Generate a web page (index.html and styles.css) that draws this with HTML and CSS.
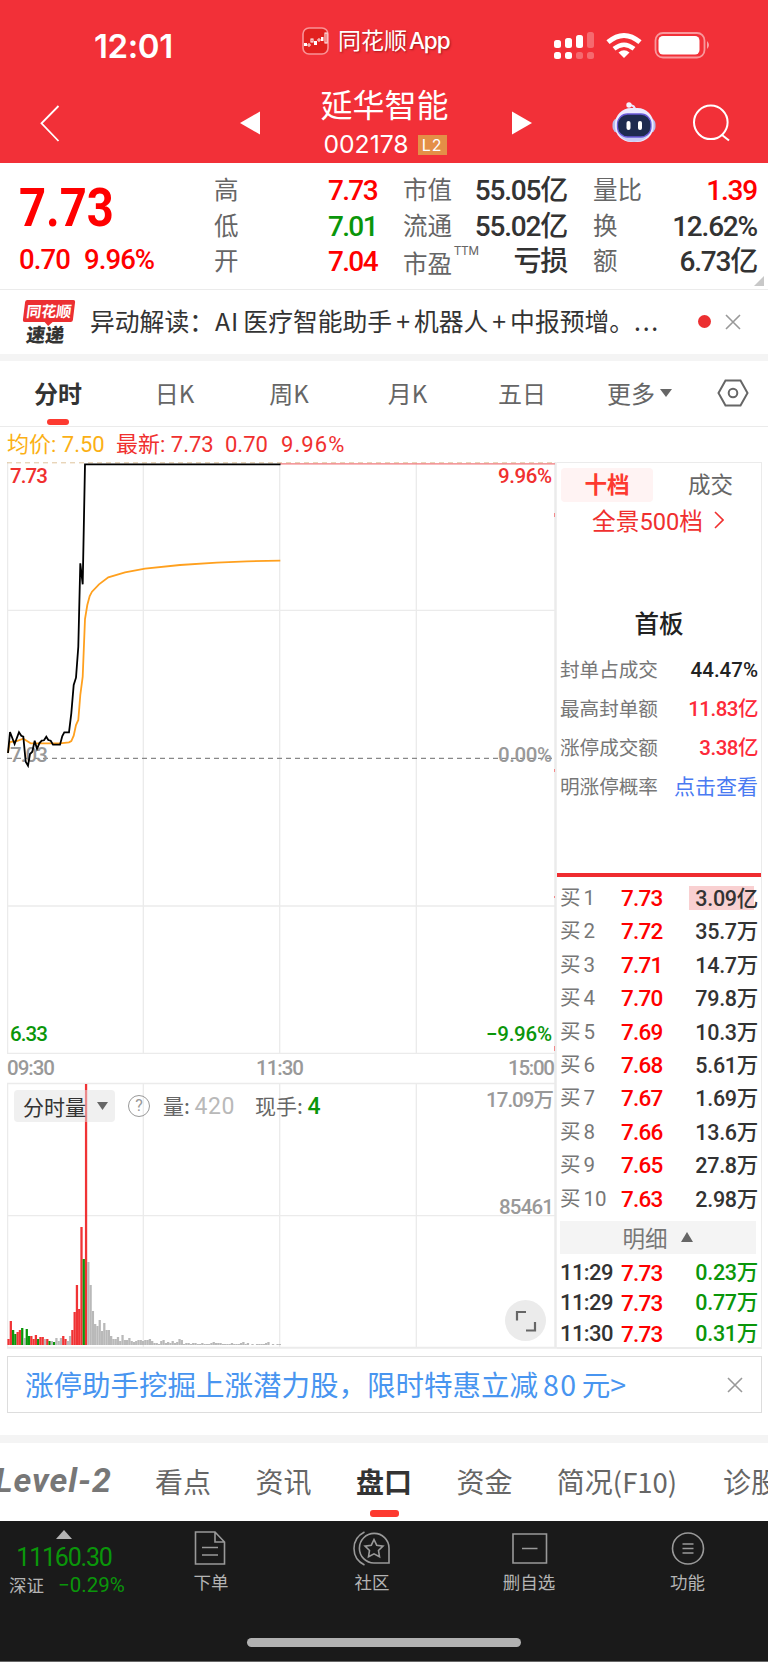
FILE: index.html
```html
<!doctype html>
<html lang="zh-CN">
<head>
    <meta charset="UTF-8">
    <meta name="viewport" content="width=device-width, initial-scale=1.0">
    <title>延华智能 002178</title>
    <link rel="stylesheet" href="styles.css">
</head>
<body>
<header class="top">
    <div class="status">
        <div class="clock">12:01</div>
        <div class="brand">
            <svg width="27" height="28" viewBox="0 0 27 28">
                <rect x="1" y="1" width="25" height="26" rx="6" fill="#e2211f" stroke="#f99397" stroke-width="1.6"/>
                <g fill="#fff">
                    <rect x="2" y="16" width="3" height="3"/>
                    <rect x="12" y="14" width="3" height="4"/>
                    <rect x="19" y="10" width="2.5" height="4"/>
                </g>
                <g fill="none" stroke="#fff">
                    <circle cx="7" cy="18" r="1.2"/>
                    <rect x="9" y="12" width="2" height="3"/>
                    <circle cx="17" cy="13" r="1.2"/>
                    <rect x="23" y="6" width="2" height="10"/>
                </g>
            </svg>
            <span>同花顺<b>App</b></span>
        </div>
        <svg class="phone-icons" width="158" height="30" viewBox="552 30 158 30">
            <g fill="#fff">
                <rect x="553" y="40" width="7" height="8" rx="2.5"/>
                <rect x="564" y="38" width="7" height="10" rx="2.5"/>
                <rect x="575" y="35" width="7" height="13" rx="2.5"/>
                <rect x="553" y="52" width="7" height="7" rx="2.5"/>
                <rect x="564" y="52" width="7" height="7" rx="2.5"/>
                <g opacity=".28">
                    <rect x="586" y="32" width="7" height="16" rx="2.5"/>
                    <rect x="575" y="52" width="7" height="7" rx="2.5"/>
                    <rect x="586" y="52" width="7" height="7" rx="2.5"/>
                </g>
                <path d="M623 58l-5.5-5.5q5.500-4.500 11 0z"/>
                <rect x="657.500" y="36" width="41" height="18.500" rx="4.500"/>
                <path d="M706 41q4 4 0 8z" opacity=".55"/>
            </g>
            <g fill="none" stroke="#fff">
                <path d="M607 42.200q16-13.400 32 0" stroke-width="5"/>
                <path d="M613 48.800q10-8.200 20 0" stroke-width="4.500"/>
                <rect x="654.500" y="33" width="49" height="24.500" rx="7.500" stroke-width="1.800" opacity=".5"/>
            </g>
        </svg>
    </div>
    <div class="nav">
        <svg width="24" height="40" viewBox="38 103 24 40"><path d="M58.500 106L41.500 123.300L58.500 141" fill="none" stroke="#fff" stroke-width="1.800"/></svg>
        <svg class="prev" width="20" height="24" viewBox="0 0 20 24"><path d="M0 12L20 .5v23z" fill="#fff"/></svg>
        <div class="stock">
            <h1>延华智能</h1>
            <div class="code">002178<i>L2</i></div>
        </div>
        <svg class="next" width="20" height="24" viewBox="0 0 20 24"><path d="M20 12L0 .5v23z" fill="#fff"/></svg>
        <svg class="robot" width="46" height="42" viewBox="610 101 46 42">
            <path d="M634 110q0-5-6-5" fill="none" stroke="#e8e6ff" stroke-width="2.200"/>
            <circle cx="628" cy="105" r="2.700" fill="#f4f3ff"/>
            <rect x="611.500" y="118" width="43" height="15" rx="6" fill="#b6bcec"/>
            <rect x="614" y="108" width="38.500" height="34" rx="16" fill="#eceaff"/>
            <path d="M616 131q5 11 17 11t17-11z" fill="#c9cdf5"/>
            <rect x="616.500" y="114" width="33.500" height="23" rx="10" fill="#1e2b4f" stroke="#6a5ad8" stroke-width="1.300"/>
            <rect x="625.500" y="121" width="4" height="9" rx="2" fill="#fff"/>
            <rect x="637" y="121" width="4" height="9" rx="2" fill="#fff"/>
        </svg>
        <svg class="search" width="40" height="40" viewBox="691 103 40 40"><g fill="none" stroke="#fff" stroke-width="2"><circle cx="709.800" cy="122.300" r="16.800"/><path d="M721 135l7 5.500"/></g></svg>
    </div>
</header>

<section class="quote num">
    <div class="last">
        <strong>7.73</strong>
        <p><span>0.70</span><span>9.96%</span></p>
    </div>
    <dl class="c1">
        <dt>高</dt><dd class="up">7.73</dd>
        <dt>低</dt><dd class="down">7.01</dd>
        <dt>开</dt><dd class="up">7.04</dd>
    </dl>
    <dl class="c2">
        <dt>市值</dt><dd>55.05亿</dd>
        <dt>流通</dt><dd>55.02亿</dd>
        <dt class="pe">市盈<sup>TTM</sup></dt><dd>亏损</dd>
    </dl>
    <dl class="c3">
        <dt>量比</dt><dd class="up">1.39</dd>
        <dt>换</dt><dd>12.62%</dd>
        <dt>额</dt><dd>6.73亿</dd>
    </dl>
</section>

<section class="news">
    <div class="express"><b>同花顺</b><em>速递</em></div>
    <p>异动解读：<span>AI</span>医疗智能助手<u>+</u>机器人<u>+</u>中报预增。<s>...</s></p>
    <i class="dot"></i>
    <svg width="16" height="16" viewBox="0 0 16 16"><path d="M1 1l14 14M15 1L1 15" stroke="#999" stroke-width="1.600"/></svg>
</section>

<nav class="periods">
    <span class="on">分时</span>
    <span>日K</span>
    <span>周K</span>
    <span>月K</span>
    <span>五日</span>
    <span>更多<svg width="12" height="8" viewBox="0 0 12 8"><path d="M0 0h12L6 8z" fill="#666"/></svg></span>
    <span><svg width="32" height="30" viewBox="716 378 32 30"><g fill="none" stroke="#666" stroke-width="2"><path d="M724.500 380.500h15l7 12.500l-7 12.500h-15l-7-12.500z"/><circle cx="732" cy="393" r="4.300"/></g></svg></span>
</nav>

<div class="legend num">
    <span class="avg">均价: 7.50</span><span>最新: 7.73</span><span>0.70</span><span>9.96%</span>
</div>

<main class="board">
    <div class="chart">
        <svg width="550" height="887" viewBox="7 462 550 887">
            <g fill="none" stroke="#ebebeb" stroke-width="1.300">
                <path d="M7 610.300H555M7 906H555M7 1053.300H555M7 1083.500H555M7 1215.700H555"/>
                <path d="M143.300 463V1053M279.700 463V1053M416.300 463V1053M143.300 1084V1347M279.700 1084V1347M416.300 1084V1347"/>
                <path d="M7.600 462V1053M7.600 1083V1348"/>
                <path d="M7 1347.800H557" stroke-width="2"/>
                <path d="M555.500 462V1348" stroke-width="2.500"/>
            </g>
            <path d="M7 462.800H555" stroke="#dfc39c" stroke-dasharray="5 4"/>
            <path d="M280 463.800H555" stroke="#f0797c" stroke-width="1.200"/>
            <path d="M554.500 513v4M554.500 769v3M554.500 896v2M554.500 1046v5" stroke="#f3898b"/>
            <path d="M7 758.300H555" stroke="#888" stroke-width="1.200" stroke-dasharray="5 4"/>
            <g class="axis">
                <text x="10" y="483" textLength="38" class="r">7.73</text>
                <text x="498" y="483" textLength="54" class="r">9.96%</text>
                <text x="10" y="762" textLength="38">7.03</text>
                <text x="498" y="762" textLength="54">0.00%</text>
                <text x="10" y="1041" textLength="38" class="g">6.33</text>
                <text x="486" y="1041" textLength="66" class="g">−9.96%</text>
                <text x="7" y="1075" textLength="48">09:30</text>
                <text x="256" y="1075" textLength="48">11:30</text>
                <text x="508" y="1075" textLength="47">15:00</text>
                <text x="486" y="1107" textLength="68">17.09万</text>
                <text x="499" y="1214" textLength="55">85461</text>
            </g>
            <path d="M8 753L9.700 742L16.700 741L23.300 738.700L27 741L30.700 743.300H60L69 742.300L71.300 741L73.700 735.700L76 725L78.300 720L80.300 695L82.700 676.700L85 619L87.300 605L89.700 596L92 591.700L99 584.300L108.300 577.300L125 572.300L145 568.700L180 565L216.700 562.700L246.700 561.300L280.300 560.700" fill="none" stroke="#ffa01e" stroke-width="1.800"/>
            <path d="M8 753L10 732L14.600 744L19 732.300L21.300 735.700L23.300 736.700L25.700 761.700L28 765.700L30 754L32.300 751.700L34.700 740.700L37 749L39.300 743.300L41.700 740.700L44 740.300L46.300 736.700L48.300 740L50.700 740.700L53 744.700H60L62.300 736L64.300 732.300H69L71.300 713.300L73.700 685L76 677.700L78.300 646.700L80.300 563.300L82.700 584.300L85 464.300H280.500" fill="none" stroke="#000" stroke-width="1.800"/>
            <g id="volume"></g>
        </svg>
        <div class="vol-bar">
            <span class="pick">分时量<svg width="11" height="8" viewBox="0 0 11 8"><path d="M0 0h11L5.500 8z" fill="#666"/></svg></span>
            <i class="help">?</i>
            <span class="vol">量: <b class="num">420</b></span>
            <span class="hand">现手: <b class="num">4</b></span>
        </div>
        <div class="expand"><svg width="22" height="22" viewBox="0 0 22 22"><path d="M2 10.500V2h9M20 12v8.500h-9" fill="none" stroke="#666" stroke-width="2.200"/></svg></div>
    </div>

    <aside class="depth num">
        <div class="switch"><b>十档</b><span>成交</span></div>
        <div class="full">全景500档<svg width="10" height="18" viewBox="0 0 10 18"><path d="M1 1l8 8l-8 8" fill="none" stroke="#f0302f" stroke-width="1.600"/></svg></div>
        <h2>首板</h2>
        <ul class="facts">
            <li>封单占成交<b>44.47%</b></li>
            <li>最高封单额<b class="red">11.83亿</b></li>
            <li>涨停成交额<b class="red">3.38亿</b></li>
            <li>明涨停概率<b class="link">点击查看</b></li>
        </ul>
        <ol class="bids">
            <li><span>买 1</span><b>7.73</b><em class="hot">3.09亿</em></li>
            <li><span>买 2</span><b>7.72</b><em>35.7万</em></li>
            <li><span>买 3</span><b>7.71</b><em>14.7万</em></li>
            <li><span>买 4</span><b>7.70</b><em>79.8万</em></li>
            <li><span>买 5</span><b>7.69</b><em>10.3万</em></li>
            <li><span>买 6</span><b>7.68</b><em>5.61万</em></li>
            <li><span>买 7</span><b>7.67</b><em>1.69万</em></li>
            <li><span>买 8</span><b>7.66</b><em>13.6万</em></li>
            <li><span>买 9</span><b>7.65</b><em>27.8万</em></li>
            <li><span>买 10</span><b>7.63</b><em>2.98万</em></li>
        </ol>
        <div class="detail">明细<svg width="12" height="10" viewBox="0 0 12 10"><path d="M0 10h12L6 0z" fill="#666"/></svg></div>
        <ol class="bids trades">
            <li><span>11:29</span><b>7.73</b><em>0.23万</em></li>
            <li><span>11:29</span><b>7.73</b><em>0.77万</em></li>
            <li><span>11:30</span><b>7.73</b><em>0.31万</em></li>
        </ol>
    </aside>
</main>

<div class="promo">
    <span>涨停助手挖掘上涨潜力股，限时特惠立减<b>80</b>元&gt;</span>
    <svg width="16" height="16" viewBox="0 0 16 16"><path d="M1 1l14 14M15 1L1 15" stroke="#999" stroke-width="1.600"/></svg>
</div>

<nav class="sections">
    <span class="level">Level-2</span>
    <span>看点</span>
    <span>资讯</span>
    <span class="on">盘口</span>
    <span>资金</span>
    <span>简况<small>(F10)</small></span>
    <span>诊股</span>
</nav>

<footer>
    <div class="bar">
        <div class="index">
            <svg width="16" height="9" viewBox="0 0 16 9"><path d="M0 9h16L8 0z" fill="#b4b4b4"/></svg>
            <b class="num">11160.30</b>
            <p>深证<span class="num">−0.29%</span></p>
        </div>
        <div>
            <svg width="36" height="36" viewBox="193 1530 36 36"><path d="M195.500 1532h19.500l9.500 10v22h-29zM215 1532v10h9.500M202 1547.500h16M202 1555h16"/></svg>
            下单
        </div>
        <div>
            <svg width="38" height="36" viewBox="352 1530 38 36"><path d="M363.500 1532c-14 7-14 26 0 33M388 1563h-15a14.800 14.800 0 1 1 15-15z"/><path d="M373 1539.500l2.700 5.700l6.300.9l-4.500 4.400l1 6.200l-5.500-2.900l-5.500 2.900l1-6.200l-4.500-4.400l6.300-.9z"/></svg>
            社区
        </div>
        <div>
            <svg width="38" height="36" viewBox="511 1530 38 36"><path d="M514 1534h33.500v29H514zM523 1548.500h15.500"/></svg>
            删自选
        </div>
        <div>
            <svg width="36" height="36" viewBox="670 1530 36 36"><circle cx="688" cy="1548.500" r="15.500"/><path d="M682.500 1544h11M682.500 1548.500h11M682.500 1553h11"/></svg>
            功能
        </div>
    </div>
    <div class="home"></div>
</footer>

<script>
    // one bar per minute: r = up, g = down, n = flat, followed by height in px
    const bars = ('r6 r24 g15 g11 r13 r15 g17 n7 g16 g9 r9 r6 r10 g6 r8 r8 n6 r6 g4 n4 g3 n7 n4 n7 r9 r6 n4 n9 r15 r33 ' +
        'r60 r36 r118 g86 r261 n83 n60 n34 n21 n19 n25 n14 n22 n15 n15 n9 n6 n6 n8 n4 n10 n5 n5 n7 n4 n3 n4 n5 n5 n4 ' +
        'n5 n5 n6 n4 n2 n2 n1 n4 n5 n2 n3 n2 n4 n2 n3 n6 n5 n1 n2 n2 n1 n2 n2 n1 n1 n2 n1 n1 n1 n2 ' +
        'n3 n2 n2 n2 n1 n1 n1 n1 n2 n1 n1 n1 n2 n3 n1 n2 n0 n1 n0 n1 n1 n1 n1 n2 n3 n0 n1 n0 n1 n1').split(' ')
    const colors = { r: '#f03335', g: '#0a960a', n: '#b9b9b9' }
    const step = 2.28
    document.getElementById('volume').innerHTML = bars.map((bar, i) => {
        const h = Number(bar.slice(1))
        return `<rect x="${(7.4 + i * step).toFixed(2)}" y="${1345 - h}" width="2.28" height="${h}" fill="${colors[bar[0]]}"/>`
    }).join('')
</script>
</body>
</html>
```
FILE: styles.css
```css
* {
    box-sizing: border-box;
}
body, h1, h2, p, dl, dd, ul, ol {
    margin: 0;
    padding: 0;
}
body {
    width: 768px;
    height: 1662px;
    overflow: hidden;
    background: #fff;
    color: #333;
    font-family: "Noto Sans CJK SC", sans-serif;
}
svg {
    display: block;
    flex: none;
}
i, em {
    font-style: normal;
}
li {
    list-style: none;
}
.num {
    font-family: Roboto, "Noto Sans CJK SC", sans-serif;
}
.up {
    color: #f00;
}
.down {
    color: #0a960a;
}

/* header */
.top {
    height: 163px;
    background: #f23038;
    color: #fff;
}
.status {
    display: flex;
    height: 88px;
}
.clock {
    width: 302px;
    padding: 26px 0 0 94px;
    font: 600 33px/40px Inter, sans-serif;
    letter-spacing: -.4px;
}
.brand {
    display: flex;
    width: 251px;
    padding-top: 27px;
    gap: 9px;
    font-size: 23px;
    line-height: 28px;
    text-shadow: 1px 1px 2px rgba(90, 0, 0, .5);
}
.brand span {
    margin-top: -2px;
}
.brand b {
    margin-left: 2px;
    font: 500 22.500px Inter, sans-serif;
    letter-spacing: -1.100px;
}
.phone-icons {
    margin-top: 30px;
}
.nav {
    display: flex;
    height: 75px;
    padding-left: 38px;
}
.nav > svg {
    margin-top: 15px;
}
.nav .prev {
    margin: 23px 0 0 178px;
}
.nav .next {
    margin-top: 23px;
}
.stock {
    width: 252px;
    padding-left: 9px;
    padding-right: 12px;
    text-align: center;
}
.stock h1 {
    height: 41px;
    font-size: 32px;
    font-weight: 400;
    line-height: 30px;
}
.code {
    display: flex;
    justify-content: center;
    gap: 9px;
    padding-left: 1px;
    font: 400 24.700px/31px Inter, sans-serif;
}
.code i {
    width: 29px;
    height: 20px;
    margin-top: 6px;
    background: #e48f47;
    font-size: 16px;
    line-height: 20px;
    letter-spacing: 1px;
}
.nav .robot {
    margin: 13px 0 0 79px;
}
.nav .search {
    margin-left: 35px;
}

/* quote */
.quote {
    position: relative;
    display: flex;
    height: 127px;
    padding-top: 10px;
    border-bottom: 1px solid #ebebeb;
}
.quote::after {
    content: "";
    position: absolute;
    right: 4px;
    bottom: 3px;
    border: 5px solid transparent;
    border-right-color: #c8c8c8;
    border-bottom-color: #c8c8c8;
}
.last {
    width: 214px;
    padding: 5px 0 0 19px;
    color: #f00;
}
.last strong {
    display: block;
    height: 60px;
    font-size: 53px;
    line-height: 60px;
    transform: scaleX(.89);
    transform-origin: 0 0;
}
.last p {
    display: flex;
    gap: 14px;
    padding-top: 6px;
    font-size: 27.500px;
    font-weight: 500;
    line-height: 31px;
    letter-spacing: -.9px;
}
.quote dl {
    display: grid;
    grid-template-columns: auto 1fr;
    grid-auto-rows: 35.500px;
    line-height: 36px;
}
.quote dt {
    color: #666;
    font-size: 24.500px;
}
.quote dd {
    font-size: 28px;
    font-weight: 500;
    text-align: right;
    letter-spacing: -1.200px;
    white-space: nowrap;
}
.quote .c1 dd {
    letter-spacing: -1.600px;
}
.c1 {
    width: 163px;
}
.c2 {
    width: 164px;
    margin-left: 26px;
}
.c3 {
    width: 164px;
    margin-left: 26px;
}
.quote .pe {
    display: flex;
    padding-top: 3px;
}
.pe sup {
    margin: -8px -10px 0 2px;
    font-size: 12px;
    line-height: 24px;
}

/* news */
.news {
    display: flex;
    height: 64px;
    padding-left: 22px;
}
.express {
    width: 54px;
    margin-right: 14px;
    padding-top: 10px;
    text-align: center;
}
.express b {
    position: relative;
    display: block;
    height: 22px;
    margin: 0 2px;
    border-radius: 2px;
    background: #ec2f31;
    color: #fff;
    font-size: 15px;
    line-height: 21px;
    transform: skewX(-7deg);
}
.express b::after {
    content: "";
    position: absolute;
    top: 22px;
    left: 22px;
    border: 4px solid transparent;
    border-top-color: #ec2f31;
    border-bottom: 0;
}
.express em {
    display: block;
    margin-right: 7px;
    font-size: 19px;
    font-weight: 900;
    line-height: 24px;
    transform: skewX(-7deg);
}
.news p {
    width: 608px;
    font-size: 24.800px;
    line-height: 61px;
    white-space: nowrap;
}
.news p span {
    margin: 0 4px 0 1px;
    letter-spacing: 1px;
}
.news u {
    margin: 0 4px;
    text-decoration: none;
}
.news s {
    letter-spacing: 1.700px;
    text-decoration: none;
}
.dot {
    width: 13px;
    height: 13px;
    margin: 25px 14px 0 0;
    border-radius: 50%;
    background: #ec2f31;
}
.news > svg {
    margin-top: 24px;
}

/* period tabs */
.periods {
    display: grid;
    grid-template-columns: 116px 117px 112px 125px 104px 131px 56px;
    height: 73px;
    border-top: 7px solid #f4f4f4;
    border-bottom: 1px solid #ebebeb;
    color: #666;
    font-size: 24px;
    line-height: 62px;
}
.periods span {
    display: flex;
    align-items: center;
    justify-content: center;
    height: 63px;
    gap: 5px;
}
.on {
    position: relative;
    color: #333;
    font-weight: 700;
}
.on::after {
    content: "";
    position: absolute;
    bottom: -1px;
    left: 50%;
    width: 22px;
    height: 6px;
    margin-left: -11px;
    border-radius: 3px;
    background: #fd3a30;
}
.legend {
    display: flex;
    height: 35px;
    padding-left: 7px;
    color: #f0302f;
    font-size: 22px;
    line-height: 36px;
}
.legend span {
    width: 56px;
    white-space: nowrap;
}
.legend span:last-child {
    letter-spacing: 1.100px;
}
.legend .avg {
    width: 109px;
    color: #fbb015;
}
.legend .avg + span {
    width: 109px;
}

/* chart + order book */
.board {
    display: flex;
    height: 887px;
    padding-left: 7px;
}
.chart {
    position: relative;
    width: 550px;
}
.axis text {
    fill: #999;
    font: 500 20.500px Roboto, "Noto Sans CJK SC", sans-serif;
}
.axis .r {
    fill: #f0302f;
}
.axis .g {
    fill: #0a960a;
}
.vol-bar {
    position: absolute;
    top: 628px;
    left: 7px;
    display: flex;
    color: #666;
    font-size: 21px;
    line-height: 31px;
}
.pick {
    display: flex;
    align-items: center;
    width: 101px;
    height: 32px;
    padding-left: 9px;
    gap: 11px;
    border-radius: 4px;
    background: rgba(225, 225, 225, .5);
    color: #333;
}
.help {
    width: 22px;
    height: 22px;
    margin: 5px 13px 0 13px;
    border: 1.500px solid #999;
    border-radius: 50%;
    color: #999;
    font: 16px/19px Roboto, sans-serif;
    text-align: center;
}
.vol {
    width: 92px;
}
.vol-bar b {
    font-size: 23px;
    font-weight: 400;
    color: #b9b9b9;
}
.vol .num {
    letter-spacing: .5px;
}
.vol-bar .hand b {
    font-weight: 500;
    color: #0a960a;
}
.expand {
    position: absolute;
    left: 498px;
    top: 838px;
    display: grid;
    place-items: center;
    width: 41px;
    height: 41px;
    border-radius: 50%;
    background: #ebebeb;
}
.depth {
    width: 205px;
    border: 1.500px solid #ebebeb;
    border-left: 0;
    border-bottom: 2px solid #ebebeb;
}
.switch {
    display: flex;
    margin: 5px 0 0 4px;
    font-size: 22.500px;
    line-height: 34px;
    color: #666;
}
.switch b {
    width: 92px;
    border-radius: 4px;
    background: #fff3f3;
    color: #fd3a30;
    text-align: center;
}
.switch span {
    margin-left: 35px;
}
.full {
    display: flex;
    align-items: center;
    gap: 11px;
    height: 36px;
    padding-left: 35px;
    color: #f0302f;
    font-size: 23.700px;
}
.depth h2 {
    height: 51px;
    margin-top: 67px;
    font-size: 24.500px;
    font-weight: 500;
    line-height: 40px;
    text-align: center;
    color: #222;
}
.facts {
    height: 222px;
    margin-top: -5px;
}
.facts li {
    display: flex;
    justify-content: space-between;
    height: 39px;
    padding: 0 3px;
    color: #777;
    font-size: 19.600px;
    line-height: 39px;
    white-space: nowrap;
}
.facts b {
    color: #222;
    font-size: 20.500px;
    font-weight: 500;
}
.facts .red {
    color: #fd2a3a;
    letter-spacing: -.5px;
}
.facts .link {
    color: #4a7af2;
    font-size: 21px;
    font-weight: 400;
}
.bids {
    border-top: 4px solid #ef2c30;
    padding: 5px 0 5px;
}
.bids li {
    display: flex;
    height: 33.400px;
    padding: 0 3px;
    font-size: 21.500px;
    line-height: 33px;
    white-space: nowrap;
}
.bids span {
    width: 61px;
    color: #777;
    font-size: 20.500px;
    word-spacing: -2px;
}
.bids b {
    width: 68px;
    color: #f00;
    font-size: 22.500px;
    font-weight: 500;
    letter-spacing: -.8px;
}
.bids em {
    flex: 1;
    font-weight: 500;
    text-align: right;
    letter-spacing: -.3px;
}
.bids .hot {
    height: 24px;
    margin-top: 4px;
    background: linear-gradient(90deg, #f9d0d1 65px, transparent 65px);
    line-height: 25px;
}
.detail {
    display: flex;
    align-items: center;
    justify-content: center;
    gap: 13px;
    width: 196px;
    height: 33px;
    margin-left: 3px;
    padding-right: 1px;
    background: #f4f4f4;
    color: #777;
    font-size: 22.500px;
}
.trades {
    padding-top: 4px;
    padding-bottom: 0;
    border: 0;
}
.trades li {
    height: 30.500px;
    line-height: 30px;
}
.trades span {
    color: #333;
    font-size: 22px;
    font-weight: 500;
    letter-spacing: -.6px;
}
.trades em {
    color: #0a960a;
}

/* promo */
.promo {
    display: flex;
    justify-content: space-between;
    height: 57px;
    margin: 7px 6px 22px 7px;
    padding: 0 18px 0 17px;
    border: 1px solid #ddd;
    color: #4895f0;
    font-size: 28.500px;
    line-height: 53px;
    white-space: nowrap;
}
.promo svg {
    margin-top: 20px;
}
.promo b {
    margin: 0 4px 0 5px;
    font-weight: 400;
    letter-spacing: 1.500px;
}

/* section tabs */
.sections {
    display: grid;
    grid-template-columns: 133px 100px 101px 100px 101px 164px 104px;
    height: 86px;
    border-top: 8px solid #f4f4f4;
    color: #666;
    font-size: 28px;
    line-height: 77px;
    text-align: center;
    white-space: nowrap;
}
.sections > span {
    height: 75px;
}
.sections .on::after {
    bottom: 1px;
    width: 29px;
    height: 7px;
    margin-left: -14px;
}
.sections small {
    font-size: 27.500px;
}
.level {
    display: flex;
    justify-content: flex-end;
    padding-right: 21px;
    color: #777;
    font: italic 700 34px/75px Roboto, sans-serif;
    letter-spacing: 1px;
}

/* bottom bar */
footer {
    height: 141px;
    border-bottom: 1px solid #666;
    background: #1a1a1a;
    color: #b4b4b4;
}
.bar {
    display: grid;
    grid-template-columns: 128px 166px 156px 158px 159px;
    height: 117px;
    font-size: 17.500px;
    line-height: 32px;
    text-align: center;
}
.bar svg {
    margin: 9px auto 0;
}
.bar div:not(.index) svg {
    fill: none;
    stroke: #999;
    stroke-width: 1.600;
}
.index b {
    display: block;
    height: 32px;
    padding-top: 1px;
    color: #0a960a;
    font-size: 25px;
    font-weight: 400;
    line-height: 35px;
    letter-spacing: -1.200px;
}
.index p {
    display: flex;
    padding-left: 9px;
    gap: 14px;
    line-height: 28px;
}
.index p span {
    color: #0a960a;
    font-size: 20.500px;
}
.home {
    width: 274px;
    height: 9px;
    margin: 0 auto;
    border-radius: 5px;
    background: #b2b2b2;
}
```
